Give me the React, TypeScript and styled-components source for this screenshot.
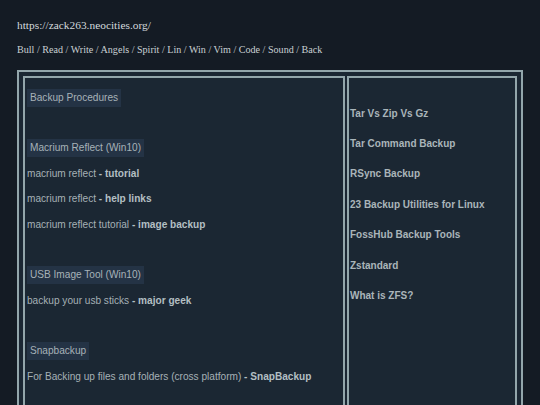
import React from "react"
import styled, { createGlobalStyle } from "styled-components"

const GlobalStyle = createGlobalStyle`
  html, body {
    margin: 0;
    padding: 0;
    background: #141b24;
  }
  body {
    font-family: "Liberation Sans", Arial, sans-serif;
  }
`

const Page = styled.div`
  padding: 14px 17px 0;
`

const SiteUrl = styled.div`
  font-family: "Liberation Serif", "Times New Roman", serif;
  font-size: 11.4px;
  color: #d3d9dc;
  height: 22px;
  line-height: 22px;
`

const Nav = styled.nav`
  font-family: "Liberation Serif", "Times New Roman", serif;
  font-size: 10.1px;
  color: #c9d0d3;
  margin-top: 4px;
  height: 20px;
  line-height: 20px;
`

const Table = styled.div`
  margin-top: 10px;
  border: 2px solid #93a6ab;
  border-bottom: none;
  padding: 4px 4px 0;
  background: #1b2733;
  display: grid;
  grid-template-columns: 322px 170px;
  column-gap: 2px;
`

const Cell = styled.div<{ $padTop: number; $padLeft: number }>`
  border: 2px solid #93a6ab;
  border-bottom: none;
  padding: ${p => p.$padTop}px 0 0 ${p => p.$padLeft}px;
  display: flex;
  flex-direction: column;
`

const Row = styled.div<{ $h: number }>`
  height: ${p => p.$h}px;
  display: flex;
  align-items: center;
  font-size: 10.1px;
  color: #a6b1b6;
  white-space: nowrap;
`

const Heading = styled.span`
  display: inline-block;
  background: #243345;
  color: #a7b2b8;
  padding: 3px 3px;
  line-height: 12px;
`

const Strong = styled.b`
  color: #b3bfc3;
  font-weight: 700;
`

const RightLink = styled(Row)`
  font-size: 10px;
  font-weight: 700;
  color: #aab5ba;
`

const LEFT_ROW = 25.33
const RIGHT_ROW = 30.4

type Item =
  | { kind: "heading"; text: string }
  | { kind: "line"; text: string; link: string }
  | { kind: "blank" }

const leftItems: Item[] = [
  { kind: "heading", text: "Backup Procedures" },
  { kind: "blank" },
  { kind: "heading", text: "Macrium Reflect (Win10)" },
  { kind: "line", text: "macrium reflect", link: "tutorial" },
  { kind: "line", text: "macrium reflect", link: "help links" },
  { kind: "line", text: "macrium reflect tutorial", link: "image backup" },
  { kind: "blank" },
  { kind: "heading", text: "USB Image Tool (Win10)" },
  { kind: "line", text: "backup your usb sticks", link: "major geek" },
  { kind: "blank" },
  { kind: "heading", text: "Snapbackup" },
  { kind: "line", text: "For Backing up files and folders (cross platform)", link: "SnapBackup" },
  { kind: "blank" },
  { kind: "blank" },
]

const rightLinks = [
  "Tar Vs Zip Vs Gz",
  "Tar Command Backup",
  "RSync Backup",
  "23 Backup Utilities for Linux",
  "FossHub Backup Tools",
  "Zstandard",
  "What is ZFS?",
]

const navLinks = ["Bull", "Read", "Write", "Angels", "Spirit", "Lin", "Win", "Vim", "Code", "Sound", "Back"]

const App = () => (
  <>
    <GlobalStyle />
    <Page>
      <SiteUrl>https://zack263.neocities.org/</SiteUrl>
      <Nav>{navLinks.join(" / ")}</Nav>
      <Table>
        <Cell $padTop={7} $padLeft={2}>
          {leftItems.map((item, i) => (
            <Row key={i} $h={LEFT_ROW}>
              {item.kind === "heading" && <Heading>{item.text}</Heading>}
              {item.kind === "line" && (
                <span>
                  {item.text} <Strong>- {item.link}</Strong>
                </span>
              )}
            </Row>
          ))}
        </Cell>
        <Cell $padTop={20} $padLeft={1}>
          {rightLinks.map(link => (
            <RightLink key={link} $h={RIGHT_ROW}>{link}</RightLink>
          ))}
        </Cell>
      </Table>
    </Page>
  </>
)

export default App
